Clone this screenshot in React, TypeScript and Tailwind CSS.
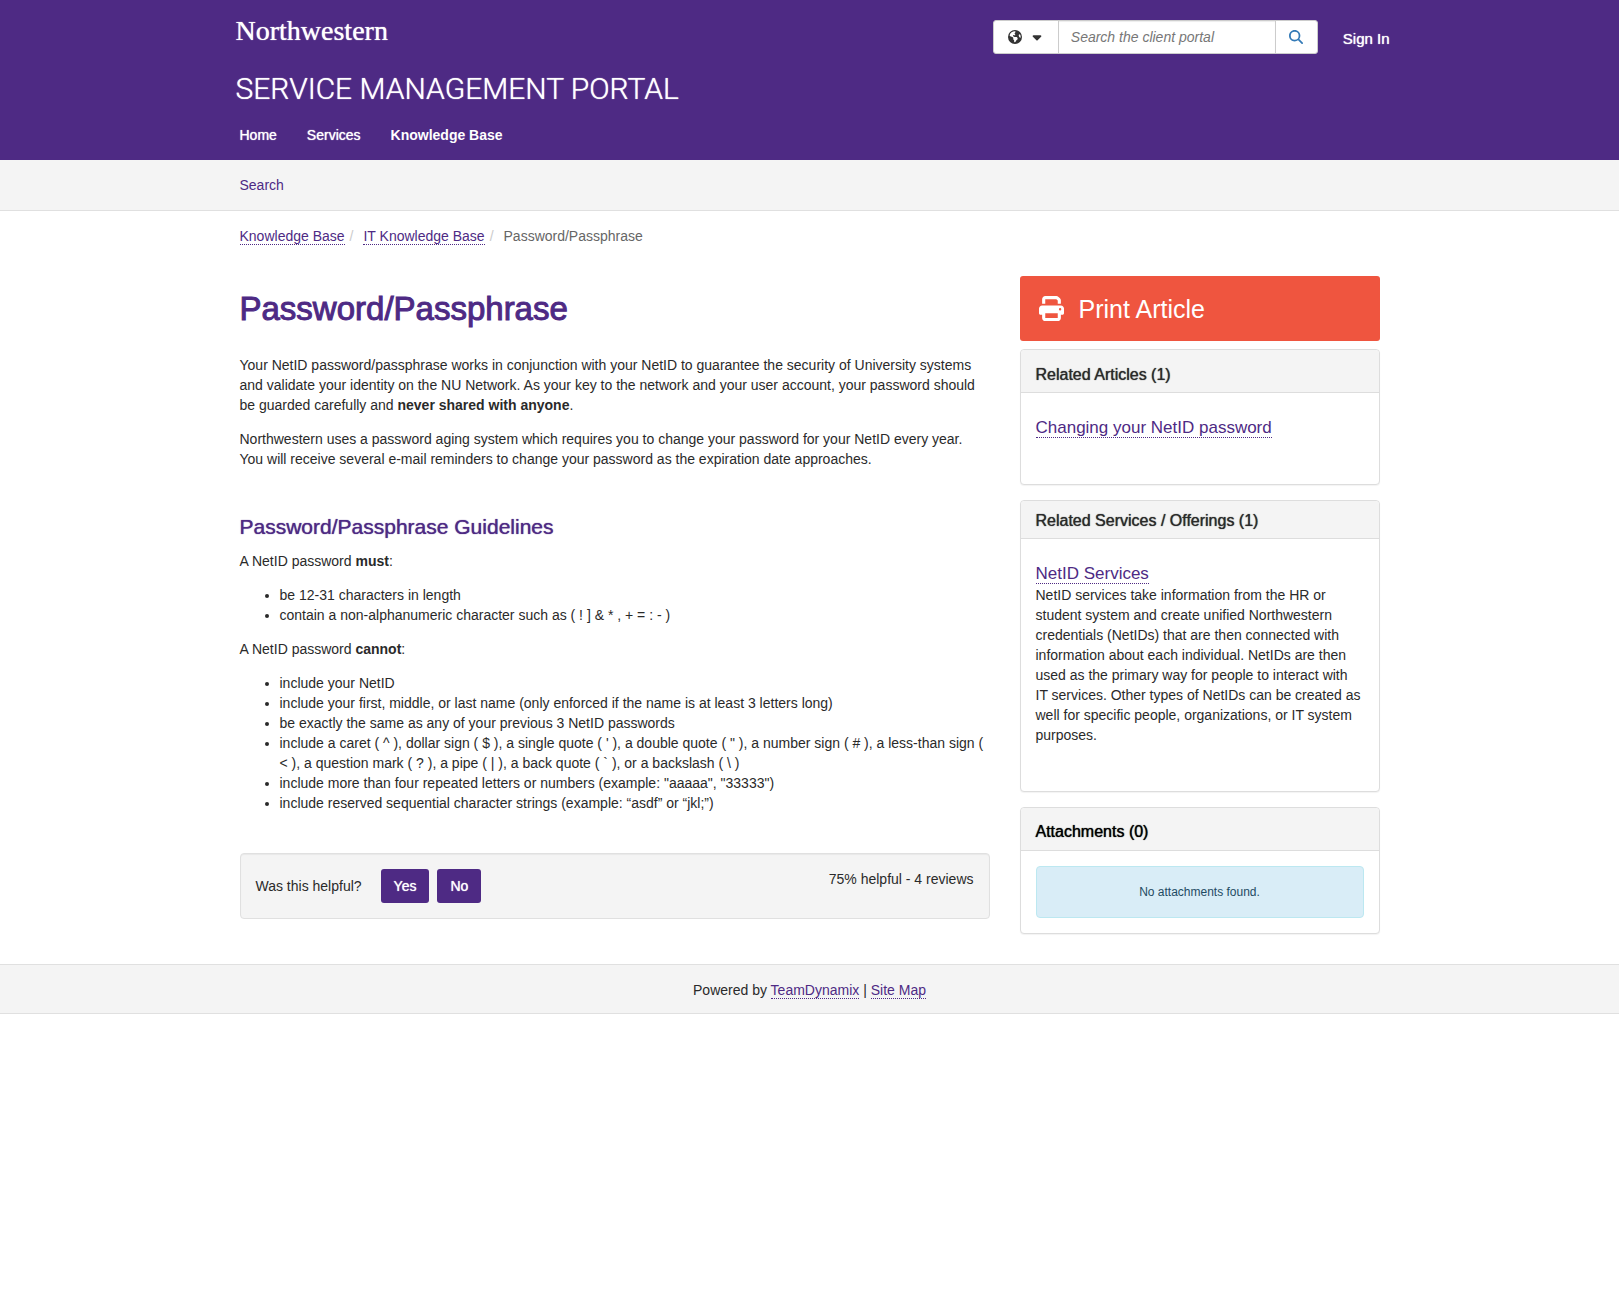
import { useState } from "react";
import type { ReactNode } from "react";
import { FaCaretDown, FaEarthAmericas, FaMagnifyingGlass, FaPrint } from "react-icons/fa6";

const medium = "[text-shadow:0_0_1px_currentColor]";
const dotted = "border-b border-dotted border-[#4e2a84] text-[#4e2a84]";

function Container({ children, className = "" }: { children: ReactNode; className?: string }) {
  return <div className={"mx-auto w-full max-w-[1170px] px-[15px] " + className}>{children}</div>;
}

function Panel({
  title,
  headingClass,
  bodyClass,
  children,
}: {
  title: string;
  headingClass: string;
  bodyClass: string;
  children: ReactNode;
}) {
  return (
    <section className="rounded border border-[#ddd] bg-white shadow-[0_1px_1px_rgba(0,0,0,0.05)]">
      <div className={"rounded-t border-b border-[#ddd] bg-[#f4f4f4] px-[15px] " + headingClass}>
        <h2 className={"text-base leading-[18px] " + medium}>{title}</h2>
      </div>
      <div className={"px-[15px] " + bodyClass}>{children}</div>
    </section>
  );
}

function Header() {
  const [query, setQuery] = useState("");
  return (
    <header className="bg-[#4e2a84] text-white">
      <div className="mx-auto flex w-full max-w-[1170px] flex-wrap justify-between gap-y-2 pr-[5px] pl-[11px]">
        <div>
          <a
            href="#northwestern"
            className={"block pt-[15px] font-['Liberation_Serif',serif] text-[28px] leading-8 " + medium}
          >
            Northwestern
          </a>
          <a
            href="#portal"
            className={"mt-6 block font-[Roboto,sans-serif] text-[30px] leading-9 font-light " + medium}
          >
            SERVICE MANAGEMENT PORTAL
          </a>
        </div>
        <div className="flex items-start gap-[25px] pt-5">
          <form className="flex h-[34px] rounded-[3px] border border-[#ccc] bg-white" onSubmit={(e) => e.preventDefault()}>
            <button
              type="button"
              aria-label="Filter your search by category"
              className="flex w-[65px] items-center justify-center gap-2 border-r border-[#ccc] text-[#333]"
            >
              <FaEarthAmericas size={14} />
              <FaCaretDown size={14} />
            </button>
            <input
              type="text"
              aria-label="Search the client portal"
              placeholder="Search the client portal"
              value={query}
              onChange={(e) => setQuery(e.target.value)}
              className="w-[216px] px-3 text-sm text-[#333] shadow-[inset_0_1px_1px_rgba(0,0,0,0.075)] outline-none placeholder:text-[#777] placeholder:italic"
            />
            <button
              type="submit"
              aria-label="Search"
              className="flex w-[42px] items-center justify-center border-l border-[#ccc] text-[#337ab7]"
            >
              <FaMagnifyingGlass size={14} />
            </button>
          </form>
          <a href="#signin" className={"mt-[9px] text-[15px] leading-5 " + medium}>
            Sign In
          </a>
        </div>
      </div>
      <Container>
        <nav aria-label="Main" className="flex gap-[30px] pt-[18px] pb-[15px] text-sm leading-5">
          <a href="#home" className={medium}>
            Home
          </a>
          <a href="#services" className={medium}>
            Services
          </a>
          <a href="#kb" className="font-bold">
            Knowledge Base
          </a>
        </nav>
      </Container>
    </header>
  );
}

function Article() {
  return (
    <article>
      <h1 className="pt-[15px] text-[33px] leading-9 text-[#4e2a84] [-webkit-text-stroke:1px_#4e2a84]">
        Password/Passphrase
      </h1>
      <p className="mt-7">
        Your NetID password/passphrase works in conjunction with your NetID to guarantee the security of University
        systems and validate your identity on the NU Network. As your key to the network and your user account, your
        password should be guarded carefully and <strong>never shared with anyone</strong>.
      </p>
      <p className="mt-[14px]">
        Northwestern uses a password aging system which requires you to change your password for your NetID every year.
        You will receive several e-mail reminders to change your password as the expiration date approaches.
      </p>
      <h2 className={"mt-[46px] text-[21px] leading-6 text-[#4e2a84] " + medium}>Password/Passphrase Guidelines</h2>
      <p className="mt-3">
        A NetID password <strong>must</strong>:
      </p>
      <ul className="mt-[14px] list-disc pl-10">
        <li>be 12-31 characters in length</li>
        <li>contain a non-alphanumeric character such as ( ! ] &amp; * , + = : - )</li>
      </ul>
      <p className="mt-[14px]">
        A NetID password <strong>cannot</strong>:
      </p>
      <ul className="mt-[14px] list-disc pl-10">
        <li>include your NetID</li>
        <li>include your first, middle, or last name (only enforced if the name is at least 3 letters long)</li>
        <li>be exactly the same as any of your previous 3 NetID passwords</li>
        <li>
          include a caret ( ^ ), dollar sign ( $ ), a single quote ( ' ), a double quote ( " ), a number sign ( # ), a
          less-than sign ( &lt; ), a question mark ( ? ), a pipe ( | ), a back quote ( ` ), or a backslash ( \ )
        </li>
        <li>include more than four repeated letters or numbers (example: "aaaaa", "33333")</li>
        <li>include reserved sequential character strings (example: “asdf” or “jkl;”)</li>
      </ul>
      <div className="mt-10 flex items-start justify-between rounded border border-[#e0e0e0] bg-[#f4f4f4] px-[15px] py-[15px] shadow-[inset_0_1px_1px_rgba(0,0,0,0.05)]">
        <div className="flex items-center">
          <span className="mr-[19px]">Was this helpful?</span>
          <button
            type="button"
            className={"mr-2 h-[34px] rounded-[3px] bg-[#4e2a84] px-[13px] text-white " + medium}
          >
            Yes
          </button>
          <button type="button" className={"h-[34px] rounded-[3px] bg-[#4e2a84] px-[13px] text-white " + medium}>
            No
          </button>
        </div>
        <p>75% helpful - 4 reviews</p>
      </div>
    </article>
  );
}

function Sidebar() {
  return (
    <aside className="flex flex-col">
      <button
        type="button"
        className="mb-2 flex h-[65px] items-center gap-[15px] rounded-[3px] bg-[#ef553f] px-[19px] text-[25px] text-white"
      >
        <FaPrint size={25} />
        Print Article
      </button>
      <div className="flex flex-col gap-[15px]">
        <Panel title="Related Articles (1)" headingClass="pt-4 pb-2" bodyClass="pt-[25px] pb-[46px]">
          <p>
            <a href="#changing" className={"text-[17px] " + dotted}>
              Changing your NetID password
            </a>
          </p>
        </Panel>
        <Panel title="Related Services / Offerings (1)" headingClass="pt-[11px] pb-2" bodyClass="pt-6 pb-[46px]">
          <p className="leading-[22px]">
            <a href="#netid" className={"text-[17px] " + dotted}>
              NetID Services
            </a>
          </p>
          <p>
            NetID services take information from the HR or student system and create unified Northwestern credentials
            (NetIDs) that are then connected with information about each individual. NetIDs are then used as the primary
            way for people to interact with IT services. Other types of NetIDs can be created as well for specific
            people, organizations, or IT system purposes.
          </p>
        </Panel>
        <Panel title="Attachments (0)" headingClass="pt-[15px] pb-[9px] text-black" bodyClass="py-[15px]">
          <div className="rounded border border-[#bce8f1] bg-[#d9edf7] py-[15px] text-center text-xs leading-5 text-[#1f4b63]">
            No attachments found.
          </div>
        </Panel>
      </div>
    </aside>
  );
}

export default function App() {
  return (
    <div className="bg-white font-['Liberation_Sans',Arial,sans-serif] text-sm leading-5 text-[#2a2a2a]">
      <Header />
      <div className="border-b border-[#e0e0e0] bg-[#f4f4f4]">
        <Container className="py-[15px]">
          <a href="#search" className="text-[#4e2a84]">
            Search
          </a>
        </Container>
      </div>
      <Container>
        <nav aria-label="Breadcrumb" className="pt-[15px]">
          <ol className="flex">
            <li>
              <a href="#kb" className={dotted}>
                Knowledge Base
              </a>
              <span className="pr-[10px] pl-[5px] text-[#ccc]">/</span>
            </li>
            <li>
              <a href="#itkb" className={dotted}>
                IT Knowledge Base
              </a>
              <span className="pr-[10px] pl-[5px] text-[#ccc]">/</span>
            </li>
            <li className="text-[#666]">Password/Passphrase</li>
          </ol>
        </nav>
        <main className="grid grid-cols-1 gap-[30px] pt-[30px] pb-[30px] lg:grid-cols-[minmax(0,1fr)_360px]">
          <Article />
          <Sidebar />
        </main>
      </Container>
      <footer className="border-y border-[#e0e0e0] bg-[#f4f4f4] pt-[15px] pb-[13px] text-center">
        Powered by{" "}
        <a href="#teamdynamix" className={dotted}>
          TeamDynamix
        </a>{" "}
        |{" "}
        <a href="#sitemap" className={dotted}>
          Site Map
        </a>
      </footer>
    </div>
  );
}
